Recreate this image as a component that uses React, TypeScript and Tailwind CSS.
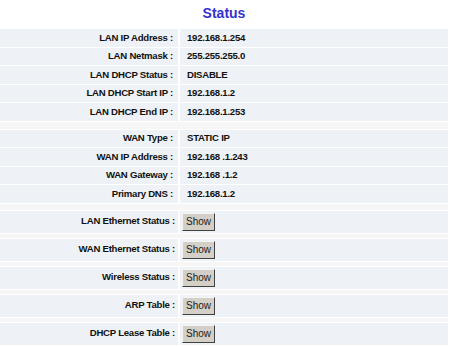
import React from "react";

const font = { fontFamily: '"Liberation Sans", Arial, sans-serif' };

function TextRow({ label, value }: { label: string; value: string }) {
  return (
    <div className="flex h-[17.5px] gap-[2px]">
      <div className="w-[178px] bg-[#eef1f6] flex items-center justify-end pr-[5px] text-[9.6px] tracking-[-0.25px] font-bold text-[#111]">
        {label}
      </div>
      <div className="flex-1 bg-[#eef1f6] flex items-center pl-[7px] text-[9.6px] tracking-[-0.25px] font-bold text-[#111]">
        {value}
      </div>
    </div>
  );
}

function ButtonRow({ label }: { label: string }) {
  return (
    <div className="flex h-[22px] gap-[2px]">
      <div className="w-[178px] bg-[#eef1f6] flex items-center justify-end pr-[3px] text-[9.6px] tracking-[-0.25px] font-bold text-[#111]">
        {label}
      </div>
      <div className="flex-1 bg-[#eef1f6] flex items-center pl-[2px]">
        <button
          className="h-[18px] w-[33px] bg-[#d4d0c8] border border-t-[#f4f4f4] border-l-[#f4f4f4] border-b-[#404040] border-r-[#404040] text-[10px] text-[#222] leading-none flex items-center justify-center"
          style={font}
        >
          Show
        </button>
      </div>
    </div>
  );
}

export default function App() {
  return (
    <div className="w-[450px] h-[346px] bg-white overflow-hidden" style={font}>
      <div className="w-[448px]">
        <div className="h-[29px] flex items-center justify-center pb-[4px]">
          <span className="text-[14px] font-bold text-[#3333cc] leading-none">Status</span>
        </div>
        <div className="flex flex-col gap-px">
          <TextRow label="LAN IP Address :" value="192.168.1.254" />
          <TextRow label="LAN Netmask :" value="255.255.255.0" />
          <TextRow label="LAN DHCP Status :" value="DISABLE" />
          <TextRow label="LAN DHCP Start IP :" value="192.168.1.2" />
          <TextRow label="LAN DHCP End IP :" value="192.168.1.253" />
          <div className="h-[7px] bg-[#f6f6f6]" />
          <TextRow label="WAN Type :" value="STATIC IP" />
          <TextRow label="WAN IP Address :" value="192.168 .1.243" />
          <TextRow label="WAN Gateway :" value="192.168 .1.2" />
          <TextRow label="Primary DNS :" value="192.168.1.2" />
          <div className="h-[6px] bg-[#f6f6f6]" />
          <ButtonRow label="LAN Ethernet Status :" />
          <div className="h-[4px] bg-[#f6f6f6]" />
          <ButtonRow label="WAN Ethernet Status :" />
          <div className="h-[4px] bg-[#f6f6f6]" />
          <ButtonRow label="Wireless Status :" />
          <div className="h-[4px] bg-[#f6f6f6]" />
          <ButtonRow label="ARP Table :" />
          <div className="h-[4px] bg-[#f6f6f6]" />
          <ButtonRow label="DHCP Lease Table :" />
        </div>
      </div>
    </div>
  );
}
